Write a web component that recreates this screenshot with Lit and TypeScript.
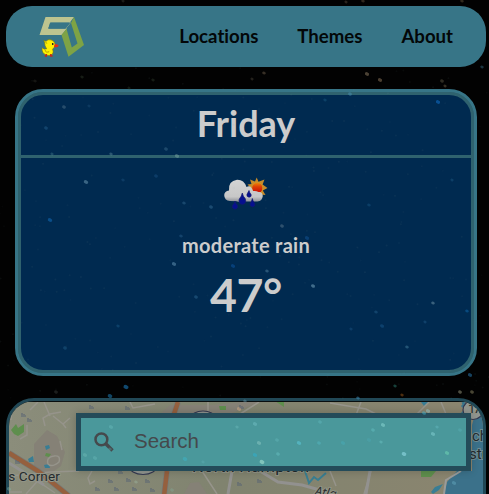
import { LitElement, html, css, svg } from "lit";
import { customElement } from "lit/decorators.js";

// x, y, radius, colour, opacity
const STARS: [number, number, number, string, number][] = [
  [64, 107, 1.8, "#6d8c9c", 0.45], [89, 106, 1.5, "#3a76a0", 0.25], [46, 128, 1.8, "#3a7baa", 0.4],
  [86, 182, 2.1, "#78a5bd", 0.6], [50, 220, 2.1, "#1670be", 0.65], [166, 149, 1.8, "#5a8ba8", 0.4],
  [177, 156, 2, "#8ab4ac", 0.5], [156, 176, 1.8, "#27649b", 0.4], [184, 203, 1.7, "#4a87ac", 0.4],
  [211, 207, 1.8, "#4a87ac", 0.45], [123, 180, 1.6, "#3478a5", 0.3], [52, 154, 1.5, "#5a97a0", 0.4],
  [111, 154, 1.6, "#6a9aa5", 0.5], [350, 94, 1.8, "#4b93b4", 0.6], [438, 102, 2, "#0f65b8", 0.8],
  [325, 100, 1.6, "#287099", 0.4], [174, 264, 2, "#6695b5", 0.65], [181, 236, 1.7, "#38729b", 0.45],
  [282, 226, 1.8, "#71899a", 0.5], [267, 271, 1.7, "#6293b0", 0.5], [313, 286, 1.9, "#7ca9c1", 0.65],
  [196, 297, 1.8, "#38759f", 0.5], [233, 266, 2, "#0e5cad", 0.55], [307, 238, 2, "#155ba0", 0.55],
  [376, 312, 1.7, "#3a7ba8", 0.4], [433, 303, 1.7, "#789cae", 0.6], [467, 311, 1.7, "#167ac4", 0.5],
  [382, 326, 1.9, "#256da1", 0.45], [407, 347, 1.7, "#5593ad", 0.5], [425, 322, 1.5, "#3270a0", 0.4],
  [351, 329, 1.5, "#2a6599", 0.4], [65, 348, 1.8, "#31789f", 0.4], [118, 326, 1.6, "#2b709f", 0.4],
  [369, 205, 1.7, "#2e76a2", 0.35], [452, 180, 1.5, "#3178a2", 0.35],
  [264, 73, 1.7, "#85715a", 0.5], [367, 74, 2, "#9a8669", 0.6], [380, 80, 2, "#9a8064", 0.6],
  [442, 81, 1.8, "#6f6a52", 0.5], [445, 86, 1.5, "#817458", 0.5], [482, 67, 1.6, "#376b83", 0.6],
  [252, 79, 1.5, "#554e42", 0.5], [82, 77, 1.6, "#455540", 0.4], [153, 80, 1.6, "#455540", 0.4],
  [35, 81, 1.7, "#3e4239", 0.4], [129, 88, 1.5, "#374b36", 0.4], [363, 1, 1.7, "#765f46", 0.5],
  [346, 2, 1.5, "#635342", 0.5], [462, 1, 1.7, "#756145", 0.5], [123, 1, 1.5, "#444438", 0.5],
  [126, 387, 2.4, "#1872ac", 0.8], [110, 396, 2.2, "#207bb0", 0.7], [56, 392, 1.8, "#434744", 0.5],
  [395, 386, 1.6, "#287469", 0.7], [402, 395, 1.6, "#a05b20", 0.6], [460, 392, 1.8, "#8b8c75", 0.7],
  [472, 392, 1.8, "#827c5d", 0.7], [358, 398, 1.7, "#3a88b0", 0.7], [470, 375, 2, "#2774a6", 0.7],
  [239, 409, 2, "#d2aa84", 0.6], [245, 401, 1.7, "#6da0af", 0.5], [255, 424, 2, "#73bec5", 0.6],
  [259, 443, 2, "#8fc9c5", 0.6], [255, 455, 2.1, "#35abc5", 0.8], [262, 462, 2.3, "#97d6c9", 0.9],
  [299, 443, 2.1, "#5bc1d1", 0.8], [277, 440, 1.8, "#6dc3c5", 0.4], [278, 454, 1.8, "#6ec8c9", 0.5],
  [185, 459, 2.2, "#40aebe", 0.8], [319, 443, 1.8, "#58bdc9", 0.5], [320, 422, 1.8, "#64bbc1", 0.5],
  [237, 427, 1.6, "#70bdbd", 0.5], [203, 462, 1.5, "#69b6bc", 0.4],
  [383, 425, 2, "#80cbc8", 0.8], [373, 430, 1.8, "#6ac6c8", 0.5], [381, 442, 1.6, "#70c8c8", 0.5],
  [433, 434, 2, "#7fcbcd", 0.7], [447, 453, 2, "#67c5ae", 0.9], [404, 454, 2.2, "#86cfd8", 0.9],
  [343, 443, 2, "#47afbd", 0.5], [369, 440, 2, "#4fadb8", 0.4], [437, 427, 1.6, "#69bdc5", 0.5],
  [460, 430, 1.8, "#5fb8c0", 0.4], [111, 427, 2, "#6bbec0", 0.5], [85, 455, 2, "#73beb9", 0.5],
  [95, 458, 2, "#69b9ba", 0.5], [110, 449, 1.7, "#64b4b5", 0.4], [428, 411, 2, "#98c8c8", 0.6],
  [424, 413, 1.9, "#48b2ca", 0.6], [454, 483, 2, "#66a9be", 0.6], [9, 489, 2, "#83b4a5", 0.5],
  [136, 482, 1.7, "#9fb9a5", 0.5], [172, 490, 1.8, "#85b5a3", 0.4],
];

// a cheap repeatable noise field for the faint far stars
const DUST = Array.from({ length: 260 }, (_, i) => {
  const a = Math.abs(Math.sin(i * 12.9898) * 43758.5453) % 1;
  const b = Math.abs(Math.sin(i * 78.233 + 3) * 24634.6345) % 1;
  return { x: a * 489, y: 67 + b * 333, o: 0.03 + ((i * 7) % 10) / 180 };
});

const MARSH = [
  [23, 416], [29, 421], [91, 408], [127, 409], [17, 463], [97, 490], [110, 482], [116, 490], [128, 481],
  [134, 490], [147, 482], [152, 491], [120, 473], [239, 485], [259, 482], [241, 408],
];

@customElement("star-field")
export class StarField extends LitElement {
  static styles = css`
    :host { display: block; position: absolute; inset: 0; pointer-events: none; }
    svg { display: block; }
  `;
  render() {
    return html`<svg width="489" height="494" viewBox="0 0 489 494">
      <defs><filter id="glow" x="-1" y="-1" width="3" height="3"><feGaussianBlur stdDeviation="0.7" /></filter></defs>
      ${DUST.map((d) => svg`<circle cx=${d.x} cy=${d.y} r="1" fill="#7c9a94" opacity=${d.o} />`)}
      <g filter="url(#glow)" opacity=".8">
        ${STARS.map(([x, y, r, c, o]) => svg`<ellipse cx=${x} cy=${y} rx=${r * 1.1} ry=${r * 0.85} fill=${c} opacity=${o} transform="rotate(25 ${x} ${y})" />`)}
      </g>
    </svg>`;
  }
}

@customElement("site-header")
export class SiteHeader extends LitElement {
  static styles = css`
    :host {
      display: flex; align-items: center; justify-content: space-between; box-sizing: border-box;
      height: 61px; padding: 0 33px 0 32px; border-radius: 26px; background: #377587;
      position: relative; z-index: 1;
    }
    .logo { display: block; }
    nav { display: flex; gap: 39px; padding-bottom: 2px; }
    a { color: #030708; font: 700 18.6px/24px Lato, sans-serif; text-decoration: none; font-variant-ligatures: none; }
  `;
  render() {
    return html`
      <svg class="logo" width="50" height="44" viewBox="38 14 50 44">
        <path d="M45.5 16H74L64.5 28.6L61 29H50L47.5 27.5H66L71 21.5H50.5L48 27.5H67L61.5 34H39.5Z" fill="#bdc48f" />
        <path d="M50 21.7H70.5L65.5 27.7H48.5Z" fill="#377587" />
        <path d="M74 16L84 44L68.5 55.7L61.5 34L66.5 27.8L71.8 46.4L77.5 42.5L71 22Z" fill="#7ea345" />
        <path d="M42.3 46.5Q43.5 49 46.6 47.8Q44.5 44.8 44.6 41.8L43.8 39.4L46 40.2Q47.8 38 51 38.8Q54.8 39.8 55.2 43.5Q55 46.5 52.6 48.2Q54.5 52.8 50.5 54.3Q45.5 55.2 42.8 51.3Q41.4 48.8 42.3 46.5Z" fill="#fff000" stroke="#777a16" stroke-width=".7" />
        <path d="M45.2 49.2Q45.5 52 49.2 50.7M45.5 40.8L46.8 42.6" fill="none" stroke="#ad9e00" />
        <path d="M54.6 43.2H57.2L58.8 44.7L57 46.3L54 46Z" fill="#e62b17" />
        <path d="M46.3 53V55H44.8M50.8 53V55H52.6" fill="none" stroke="#c52719" stroke-width="1.5" />
        <rect x="52" y="42" width="1.4" height="2" fill="#222" />
      </svg>
      <nav><a>Locations</a><a>Themes</a><a>About</a></nav>`;
  }
}

@customElement("weather-card")
export class WeatherCard extends LitElement {
  static styles = css`
    :host { display: block; margin: 22px 9px 0; font-family: Lato, sans-serif; color: #ccc; }
    .outer { border: 3px solid #377587; border-radius: 28px; background: #2f626e; }
    .inner {
      display: flex; flex-direction: column; align-items: center; box-sizing: border-box; height: 281px;
      border: 3px solid #2f626e; border-radius: 25px; background: #002a50;
    }
    h1 {
      box-sizing: border-box; align-self: stretch; height: 63px; margin: 0; padding-top: 6px;
      border-bottom: 3px solid #2f626e; text-align: center; font-size: 36px; line-height: 44px; font-weight: 700;
    }
    svg { display: block; margin-top: 12px; }
    .sky { margin-top: 13px; font-size: 20px; line-height: 24px; font-weight: 700; letter-spacing: .28px; }
    .temp { margin-top: 8px; font-size: 46.5px; line-height: 58px; font-weight: 700; letter-spacing: -.4px; }
  `;
  render() {
    return html`<div class="outer"><div class="inner">
      <h1>Friday</h1>
      <svg width="50" height="50" viewBox="221 170 50 50">
        <defs>
          <linearGradient id="sun" x2="0" y2="1"><stop stop-color="#ef8a0a" /><stop offset=".4" stop-color="#dd3d05" /><stop offset="1" stop-color="#c80505" /></linearGradient>
          <linearGradient id="cloud" x2="0" y2="1"><stop stop-color="#d4d4d4" /><stop offset=".75" stop-color="#c7c7c7" /><stop offset="1" stop-color="#858891" /></linearGradient>
        </defs>
        <path d="M256.7 177.5L258.5 181.8L264.5 179.5L262.6 184.5L267.5 188L262.8 190.5L265.5 195L260.5 194.5L257 198L253 195L248 193L250.8 188L247.5 184.5L251.5 184L250 179.5L255 181.5Z" fill="#c78c2a" />
        <circle cx="257.3" cy="188" r="5.6" fill="url(#sun)" stroke="#cf9328" stroke-width="1" />
        <path d="M230 201Q224.2 200.5 224.2 195Q224.5 191.2 229 190.6Q228 181 237 179.8Q244 179.5 246.5 187Q251 184.5 253 191Q256 190.5 258.5 192Q262.5 191.5 262.8 196Q262.2 201 257.5 201.5H245Q241 203.5 236.5 201.3Z" fill="url(#cloud)" />
        <g fill="#06108f" stroke="#141a70" stroke-width=".7">
          <path d="M242.3 193Q242.9 196.3 245.3 198.8Q246.8 204 242.5 204.4Q238 204 239.2 199.3Q241.8 196 242.3 193Z" />
          <path d="M249 190.5Q249.5 192.8 251 194.3Q252 197 249 197.2Q246.3 196.8 247 194.3Z" />
          <path d="M235 201Q235.4 203.4 237.4 205.3Q238.4 208.8 235 209.2Q231.6 208.8 232.4 205.5Q234.5 203.4 235 201Z" />
          <path d="M252.3 198.5Q252.8 201.2 254.6 203.2Q255.6 206.5 252.5 206.8Q249.3 206.4 250.2 203.4Q252 201.2 252.3 198.5Z" />
        </g>
      </svg>
      <div class="sky">moderate rain</div>
      <div class="temp">47°</div>
    </div></div>`;
  }
}

@customElement("map-panel")
export class MapPanel extends LitElement {
  static styles = css`
    :host { display: block; margin-top: 22px; position: relative; }
    .frame {
      box-sizing: border-box; height: 140px; border: 3px solid #214856; border-radius: 28px;
      overflow: hidden; background: #080e0f; padding-top: 1px;
    }
    .frame svg { display: block; }
    .search {
      position: absolute; left: 70px; top: 15px; width: 395px; height: 58px; box-sizing: border-box;
      display: flex; align-items: center; gap: 20px; padding: 0 0 2px 13px; border: 5px solid #244b59;
      background: #4a989b; color: #45494c; font: 20.5px/24px "Liberation Sans", sans-serif;
      box-shadow: 0 0 8px #0003;
    }
    .search svg { margin-top: 2px; }
    .place { font-family: "Roboto", sans-serif; fill: #242a2d; stroke: #929486; stroke-width: 2px; paint-order: stroke; }
    .water { font-family: "Noto Sans", sans-serif; font-style: italic; fill: #2d3031; stroke: #929486; stroke-width: 2px; paint-order: stroke; }
    .coast { stroke: #6f8d94; }
  `;
  render() {
    return html`
      <div class="frame"><svg width="474" height="133" viewBox="9 402 474 133">
        <defs>
          <linearGradient id="land" x2="1" y2="0"><stop stop-color="#8b8d7b" /><stop offset=".45" stop-color="#80836f" /><stop offset="1" stop-color="#8b856f" /></linearGradient>
        </defs>
        <rect x="9" y="402" width="474" height="133" fill="url(#land)" />
        <path d="M34 444L47 430L57 436L65 452L61 466L50 474L34 470ZM184 494L190 483L199 482L207 494ZM160 414L170 405H213L240 402H260L230 414Z" fill="#858176" />
        <path d="M11 430L16 424L18 428L24 424L24 432L18 436L14 434ZM46 453L51 454L49 457L45 456ZM219 406L226 406V410H220ZM275 401H284V407ZM421 471H436L431 477H421Z" fill="#5e8e4d" />
        <path d="M45 446L49 445L50 448L46 450ZM28 459L33 456L34 462H29ZM44 465L49 464L50 468L45 468ZM421 402H429L424 406ZM431 492L435 487L443 484L439 490L433 494Z" fill="#397d94" />
        <path d="M484 402H471L475 414L472 425V471H457L447 482L444 494V535H484Z" fill="#3b718a" />
        <path d="M444 494L446 480L461 471" fill="none" stroke="#9a9b99" stroke-width="2" />
        <g fill="none" stroke="#96948b" stroke-width="1.5">
          <path d="M44 402L50 416M38 402L30 410M61 412L50 414L43 418L45 426M53 416L63 424L66 428M63 424L70 418M20 439L27 435L27 425M54 456Q61 455 59 462Q52 468 48 464Q46 457 54 456M9 411L12 410L11 420M60 441L62 450M92 471L88 478L90 484L95 481" />
          <path d="M130 402L133 408L155 404M208 402V414M259 402L237 416M330 403L366 409L380 416M361 402L356 415M441 402L446 414M429 402L417 414M9 463L23 471L55 493M10 476L50 472L79 471M202 471L217 494M232 471L228 494M371 471L364 494M9 492H22M26 494L42 476M330 471L336 486" />
        </g>
        <path d="M260 471L278 482L302 485L334 494M228 494L232 471M366 494L370 471M9 463L44 485" fill="none" stroke="#92918f" stroke-width="3" />
        <path d="M9 453L38 471L69 496M178 402L174 414M167 471L164 496" fill="none" stroke="#777b78" stroke-width="6" />
        <path d="M9 453L38 471L69 496M178 402L174 414M167 471L164 496" fill="none" stroke="#95603e" stroke-width="4.5" />
        <path d="M305 471L309 483L314 477L318 480L326 473" fill="none" stroke="#397d90" stroke-width="2" />
        <path d="M463 402L466 410L462 414M462 405L469 412" fill="none" stroke="#39758c" stroke-width="3" />
        <g fill="none" stroke="#596474" stroke-width="1.1">
          ${MARSH.map(([x, y]) => svg`<path d="M${x - 2} ${y}h5M${x - 1} ${y - 1}v-2M${x + 1} ${y - 1}v-1" />`)}
        </g>
        <g fill="#929690" stroke="#343951" stroke-width="1.2">
          <ellipse cx="203" cy="418" rx="12" ry="7" /><ellipse cx="143" cy="466" rx="14" ry="8.5" />
          <ellipse cx="473" cy="410" rx="10" ry="9.5" />
        </g>
        <text class="place" x="468" y="413" font-size="13">1A</text>
        <text class="place" x="8.3" y="481" font-size="13.6" textLength="51.5">s Corner</text>
        <text class="place" x="192" y="472" font-size="16.5" textLength="117">North Hampton</text>
        <text class="place coast" x="472" y="441" font-size="15">ch</text>
        <text class="place coast" x="469" y="458.5" font-size="15">str</text>
        <text class="water" x="314.5" y="495" font-size="12.5" transform="rotate(9 314 495)">Atla</text>
        <text class="place" x="329" y="501" font-size="13">n</text>
      </svg></div>
      <div class="search">
        <svg width="20" height="20" viewBox="0 0 20 20"><circle cx="7.4" cy="7.4" r="5.9" fill="none" stroke="#45494c" stroke-width="2.5" /><path d="M11.8 11.8L18.5 18.5" stroke="#45494c" stroke-width="3.4" /></svg>
        <span>Search</span>
      </div>`;
  }
}

@customElement("app-root")
export class AppRoot extends LitElement {
  static styles = css`
    :host { display: block; position: relative; box-sizing: border-box; height: 494px; padding: 6px 3px 0 6px; overflow: hidden; background: #020202; }
  `;
  render() {
    return html`<site-header></site-header><weather-card></weather-card><map-panel></map-panel><star-field></star-field>`;
  }
}
